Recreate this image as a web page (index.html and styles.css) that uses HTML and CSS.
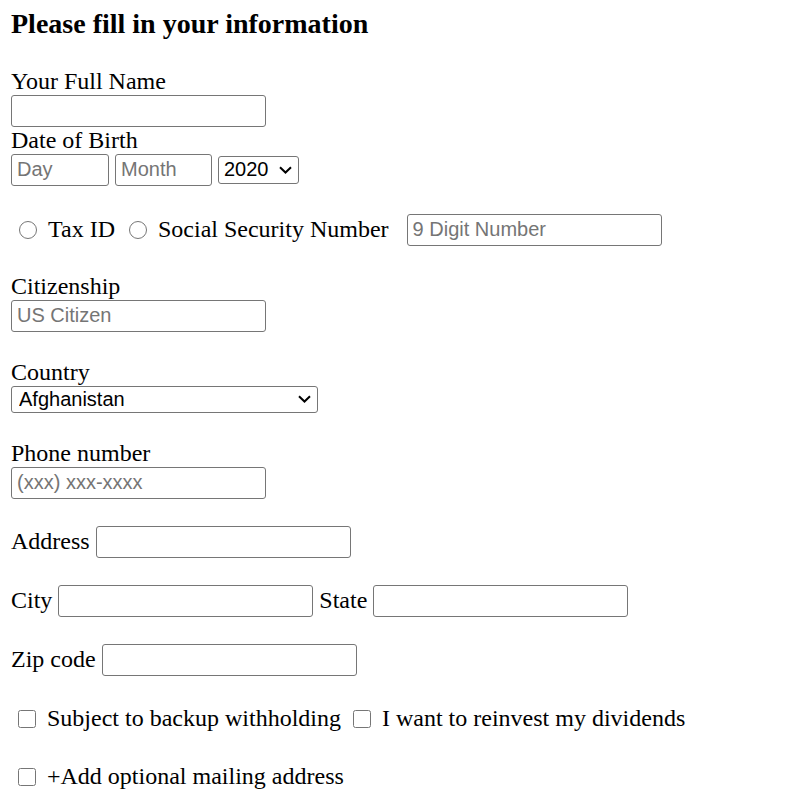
FILE: index.html
```html
<!DOCTYPE html>
<html lang="en">
<head>
<meta charset="utf-8">
<title>Information form</title>
<link rel="stylesheet" href="styles.css">
</head>
<body>
<form class="form">
  <h1 class="title">Please fill in your information</h1>

  <div class="field">
    <label class="label" for="fullname">Your Full Name</label>
    <input class="text" id="fullname" type="text">
  </div>

  <div class="field">
    <span class="label">Date of Birth</span>
    <div class="dob">
      <input class="text short" type="text" placeholder="Day">
      <input class="text short month" type="text" placeholder="Month">
      <span class="select-wrap">
        <select class="select year">
          <option>2020</option>
          <option>2019</option>
          <option>2018</option>
        </select>
        <svg class="chevron" width="13" height="8" viewBox="0 0 13 8" aria-hidden="true"><path d="M1 1.2 L6.5 6.5 L12 1.2" fill="none" stroke="#000" stroke-width="2"/></svg>
      </span>
    </div>
  </div>

  <div class="row group first">
    <label class="choice radio-choice"><input class="radio" type="radio" name="idtype"><span>Tax ID</span></label>
    <label class="choice radio-choice"><input class="radio" type="radio" name="idtype"><span>Social Security Number</span></label>
    <input class="text ssn" type="text" placeholder="9 Digit Number">
  </div>

  <div class="field group">
    <label class="label" for="citizen">Citizenship</label>
    <input class="text" id="citizen" type="text" placeholder="US Citizen">
  </div>

  <div class="field group">
    <label class="label" for="country">Country</label>
    <span class="select-wrap">
      <select class="select country" id="country">
        <option>Afghanistan</option>
        <option>Albania</option>
        <option>Algeria</option>
      </select>
      <svg class="chevron" width="13" height="8" viewBox="0 0 13 8" aria-hidden="true"><path d="M1 1.2 L6.5 6.5 L12 1.2" fill="none" stroke="#000" stroke-width="2"/></svg>
    </span>
  </div>

  <div class="field group">
    <label class="label" for="phone">Phone number</label>
    <input class="text" id="phone" type="text" placeholder="(xxx) xxx-xxxx">
  </div>

  <div class="row group">
    <label class="inline-label" for="address">Address</label>
    <input class="text" id="address" type="text">
  </div>

  <div class="row group">
    <label class="inline-label" for="city">City</label>
    <input class="text" id="city" type="text">
    <label class="inline-label" for="state">State</label>
    <input class="text" id="state" type="text">
  </div>

  <div class="row group">
    <label class="inline-label" for="zip">Zip code</label>
    <input class="text" id="zip" type="text">
  </div>

  <div class="row checks">
    <label class="choice"><input class="check" type="checkbox"><span>Subject to backup withholding</span></label>
    <label class="choice"><input class="check" type="checkbox"><span>I want to reinvest my dividends</span></label>
  </div>

  <div class="row checks">
    <label class="choice"><input class="check" type="checkbox"><span>+Add optional mailing address</span></label>
  </div>
</form>
</body>
</html>
```

FILE: styles.css
```css
html {
  background: #ffffff;
}

body {
  margin: 0;
  padding: 8px 11px;
  font-family: "Liberation Serif", "Times New Roman", serif;
  font-size: 24px;
  color: #000000;
  background: #ffffff;
}

.form {
  display: flex;
  flex-direction: column;
  align-items: flex-start;
}

.title {
  margin: 0 0 27.6px;
  font-size: 28px;
  font-weight: bold;
  line-height: 32px;
}

.field {
  display: flex;
  flex-direction: column;
  align-items: flex-start;
}

.label {
  line-height: 27px;
}

.group {
  margin-top: 27px;
}

.group.first {
  margin-top: 28px;
}

.text {
  box-sizing: border-box;
  width: 255px;
  height: 32px;
  margin: 0;
  padding: 1px 5px;
  font-family: "Liberation Sans", Arial, sans-serif;
  font-size: 20px;
  color: #000000;
  background: #ffffff;
  border: 1px solid #767676;
  border-radius: 3px;
}

.text::placeholder {
  color: #757575;
}

.dob {
  display: flex;
  align-items: center;
  gap: 6px;
}

.short {
  width: 98px;
}

.short.month {
  width: 97px;
}

.select-wrap {
  position: relative;
  display: inline-flex;
}

.select {
  box-sizing: border-box;
  margin: 0;
  -webkit-appearance: none;
  appearance: none;
  font-family: "Liberation Sans", Arial, sans-serif;
  font-size: 20px;
  line-height: 23px;
  color: #000000;
  background: #ffffff;
  border: 1px solid #767676;
  border-radius: 3px;
}

.chevron {
  position: absolute;
  right: 7px;
  top: 50%;
  margin-top: -4px;
  pointer-events: none;
}

.year {
  width: 81px;
  height: 28px;
  padding: 1px 20px 1px 5px;
}

.country {
  width: 307px;
  height: 27px;
  padding: 1px 24px 1px 7px;
}

.row {
  display: flex;
  align-items: center;
  line-height: 27px;
}

.choice {
  display: flex;
  align-items: center;
  margin-right: 5px;
}

.radio-choice {
  margin-right: 6px;
}

.radio {
  width: 18px;
  height: 18px;
  margin: 0 11px 0 8px;
}

.ssn {
  margin-left: 12px;
}

.inline-label {
  margin-right: 6px;
}

.inline-label + .text + .inline-label {
  margin-left: 6px;
}

.checks {
  height: 30px;
  margin-top: 28px;
}

.check {
  width: 18px;
  height: 18px;
  margin: 0 11px 0 7px;
}
```
